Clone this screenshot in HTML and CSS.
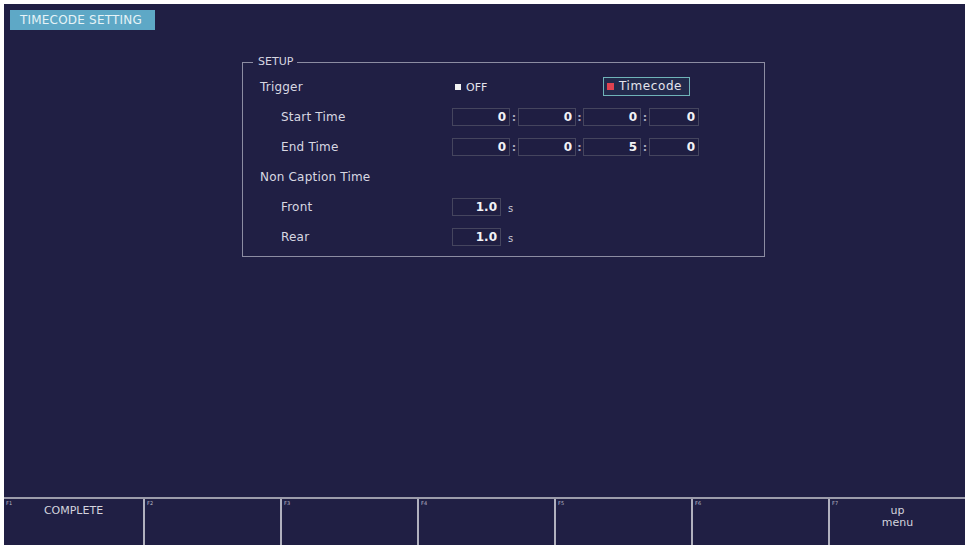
FILE: index.html
```html
<!DOCTYPE html>
<html>
<head>
<meta charset="utf-8">
<link rel="stylesheet" href="styles.css">
</head>
<body>
<div class="screen">
  <div class="header"><span class="tab">TIMECODE SETTING</span></div>
  <div class="setup">
    <span class="legend">SETUP</span>
    <div class="row">
      <div class="label">Trigger</div>
      <div class="value">
        <span class="radio"><span class="sq"></span>OFF</span>
        <span class="tcbtn"><span class="sq red"></span>Timecode</span>
      </div>
    </div>
    <div class="row">
      <div class="label sub">Start Time</div>
      <div class="value tc">
        <span class="field">0</span><span class="colon">:</span>
        <span class="field">0</span><span class="colon">:</span>
        <span class="field">0</span><span class="colon">:</span>
        <span class="field last">0</span>
      </div>
    </div>
    <div class="row">
      <div class="label sub">End Time</div>
      <div class="value tc">
        <span class="field">0</span><span class="colon">:</span>
        <span class="field">0</span><span class="colon">:</span>
        <span class="field">5</span><span class="colon">:</span>
        <span class="field last">0</span>
      </div>
    </div>
    <div class="row">
      <div class="label">Non Caption Time</div>
      <div class="value"></div>
    </div>
    <div class="row">
      <div class="label sub">Front</div>
      <div class="value"><span class="field short">1.0</span><span class="unit">s</span></div>
    </div>
    <div class="row">
      <div class="label sub">Rear</div>
      <div class="value"><span class="field short">1.0</span><span class="unit">s</span></div>
    </div>
  </div>
  <div class="spacer"></div>
  <div class="fbar">
    <div class="fkey first"><span class="fnum">F1</span><span class="ftext">COMPLETE</span></div>
    <div class="fkey"><span class="fnum">F2</span></div>
    <div class="fkey"><span class="fnum">F3</span></div>
    <div class="fkey"><span class="fnum">F4</span></div>
    <div class="fkey"><span class="fnum">F5</span></div>
    <div class="fkey"><span class="fnum">F6</span></div>
    <div class="fkey"><span class="fnum">F7</span><span class="ftext">up<br>menu</span></div>
  </div>
</div>
</body>
</html>
```
FILE: styles.css
```css
html, body {
  margin: 0;
  padding: 0;
  background: #ffffff;
}
body {
  font-family: "DejaVu Sans", "Liberation Sans", sans-serif;
}
.screen {
  margin: 4px 5px 0 4px;
  height: 541px;
  background: #201f44;
  display: flex;
  flex-direction: column;
  overflow: hidden;
}
.header {
  padding: 6px 0 0 6px;
  height: 20px;
  display: flex;
}
.tab {
  background: #5ea8c6;
  color: #e6f3f7;
  font-size: 12px;
  line-height: 20px;
  padding: 0 0 0 10px;
  width: 135px;
  letter-spacing: 0.2px;
  white-space: nowrap;
}
.setup {
  position: relative;
  margin: 32px 0 0 238px;
  width: 521px;
  height: 184px;
  border: 1px solid #8c8ca2;
  padding-top: 9px;
  box-sizing: content-box;
}
.legend {
  position: absolute;
  top: -8px;
  left: 10px;
  padding: 0 4px 0 5px;
  background: #201f44;
  color: #d6d6e0;
  font-size: 11px;
  line-height: 14px;
}
.row {
  display: flex;
  align-items: center;
  height: 30px;
}
.label {
  width: 209px;
  padding-left: 17px;
  box-sizing: border-box;
  color: #d8d8e2;
  font-size: 12px;
  letter-spacing: 0.2px;
}
.label.sub {
  padding-left: 38px;
}
.value {
  display: flex;
  align-items: center;
  color: #e4e4ec;
  font-size: 12px;
}
.radio {
  display: flex;
  align-items: center;
  margin-left: 3px;
  width: 148px;
  font-size: 11px;
}
.sq {
  display: inline-block;
  width: 6px;
  height: 6px;
  background: #f2f2f2;
  margin-right: 5px;
}
.sq.red {
  width: 7px;
  height: 7px;
  background: #e04250;
  margin-right: 5px;
}
.tcbtn {
  display: flex;
  align-items: center;
  box-sizing: border-box;
  width: 87px;
  height: 19px;
  border: 1px solid #6fb3b8;
  background: #232a4c;
  padding-left: 3px;
  letter-spacing: 0.6px;
  margin-top: -2px;
}
.field {
  box-sizing: border-box;
  width: 58px;
  height: 18px;
  border: 1px solid #45455e;
  background: #1f1e42;
  color: #f2f2f6;
  font-weight: bold;
  font-size: 12px;
  line-height: 16px;
  text-align: right;
  padding-right: 3px;
}
.field.last {
  width: 50px;
}
.field.short {
  width: 49px;
}
.colon {
  width: 8px;
  text-align: center;
  color: #a8a8bc;
  font-size: 11px;
  font-weight: bold;
}
.tc .colon:nth-child(4) {
  width: 7px;
}
.unit {
  margin-left: 7px;
  color: #c8c8d4;
  font-size: 10px;
  margin-top: 3px;
}
.spacer {
  flex: 1;
}
.fbar {
  height: 46px;
  border-top: 2px solid #9c9cab;
  display: flex;
}
.fkey {
  position: relative;
  flex: 1;
  border-left: 2px solid #b0b0be;
  display: flex;
  justify-content: center;
  color: #d4d4de;
  font-size: 11px;
  text-align: center;
  line-height: 12px;
  padding-top: 6px;
}
.fkey.first {
  flex: 0 0 139px;
  border-left: none;
}
.fnum {
  position: absolute;
  top: 1px;
  left: 2px;
  font-size: 5px;
  line-height: 6px;
  color: #b8b8c6;
}
.ftext {
  display: block;
}
```
